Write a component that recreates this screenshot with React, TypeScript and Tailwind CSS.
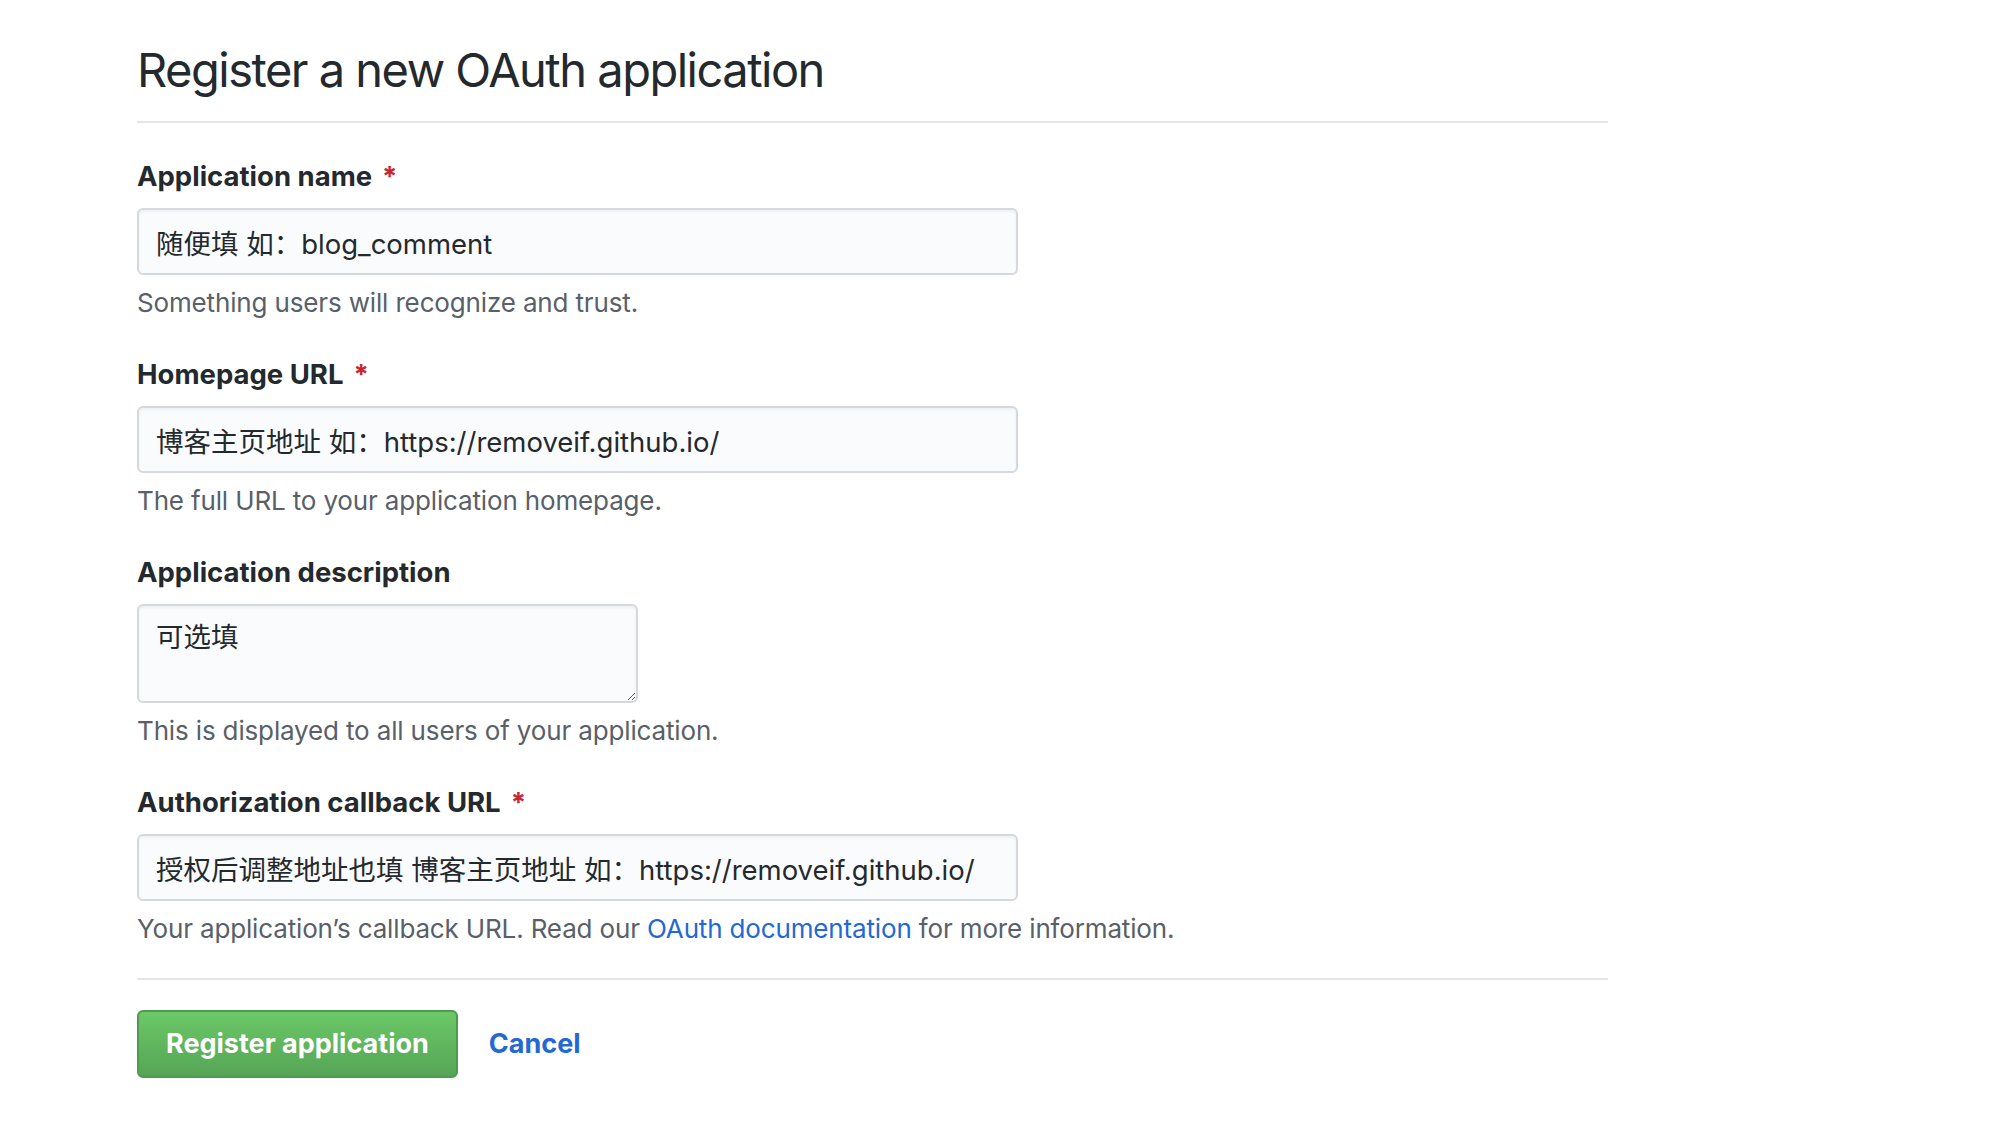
import type { ReactNode } from "react";

const FONT = "font-['Inter','Noto_Sans_CJK_SC',sans-serif]";

function Field({
  label,
  required,
  help,
  children,
}: {
  label: string;
  required?: boolean;
  help: ReactNode;
  children: ReactNode;
}) {
  return (
    <div className="mt-[35px] first:mt-0">
      <label className="block text-[27.5px] leading-[36px] font-bold text-[#24292e]">
        {label}
        {required && <span className="ml-[10px] text-[#cb2431]">*</span>}
      </label>
      <div className="mt-[14px]">{children}</div>
      <p className="mt-[10px] text-[26px] leading-[36px] tracking-[-0.15px] text-[#586069]">{help}</p>
    </div>
  );
}

const inputCls =
  "block h-[67px] w-[881px] rounded-[6px] border-2 border-[#d5d8dc] bg-[#fafbfc] px-[17px] text-[27.5px] text-[#24292e] outline-none shadow-[inset_0_2px_3px_rgba(27,31,35,0.05)]";

export default function App() {
  return (
    <div className={`${FONT} min-h-screen bg-white pl-[137px] pt-[40px]`}>
      <div className="w-[1471px]">
        <h1 className="text-[47px] leading-[59px] font-normal tracking-[-1.5px] text-[#24292e] pb-[22px] border-b-2 border-[#e4e6e9]">
          Register a new OAuth application
        </h1>

        <form className="pt-[35px]" onSubmit={(e) => e.preventDefault()}>
          <Field label="Application name" required help="Something users will recognize and trust.">
            <input className={inputCls} defaultValue="随便填 如：blog_comment" />
          </Field>

          <Field label="Homepage URL" required help="The full URL to your application homepage.">
            <input className={inputCls} defaultValue="博客主页地址 如：https://removeif.github.io/" />
          </Field>

          <Field label="Application description" help="This is displayed to all users of your application.">
            <textarea
              className="block h-[99px] w-[501px] resize-y rounded-[6px] border-2 border-[#d5d8dc] bg-[#fafbfc] px-[17px] py-[13px] text-[27.5px] leading-[36px] text-[#24292e] outline-none shadow-[inset_0_2px_3px_rgba(27,31,35,0.05)]"
              defaultValue="可选填"
            />
          </Field>

          <Field
            label="Authorization callback URL"
            required
            help={
              <>
                Your application’s callback URL. Read our{" "}
                <a href="#" className="text-[#2368d3]">
                  OAuth documentation
                </a>{" "}
                for more information.
              </>
            }
          >
            <input
              className={inputCls}
              defaultValue="授权后调整地址也填 博客主页地址 如：https://removeif.github.io/"
            />
          </Field>

          <div className="mt-[31px] border-t-2 border-[#e4e6e9] pt-[30px] flex items-center gap-[31px]">
            <button
              type="submit"
              className="h-[68px] rounded-[6px] border-2 border-[#4f9a51] bg-gradient-to-b from-[#6cc867] to-[#55a556] px-[27px] text-[27px] font-bold text-white"
            >
              Register application
            </button>
            <a href="#" className="text-[27px] font-bold text-[#2368d3]">
              Cancel
            </a>
          </div>
        </form>
      </div>
    </div>
  );
}
